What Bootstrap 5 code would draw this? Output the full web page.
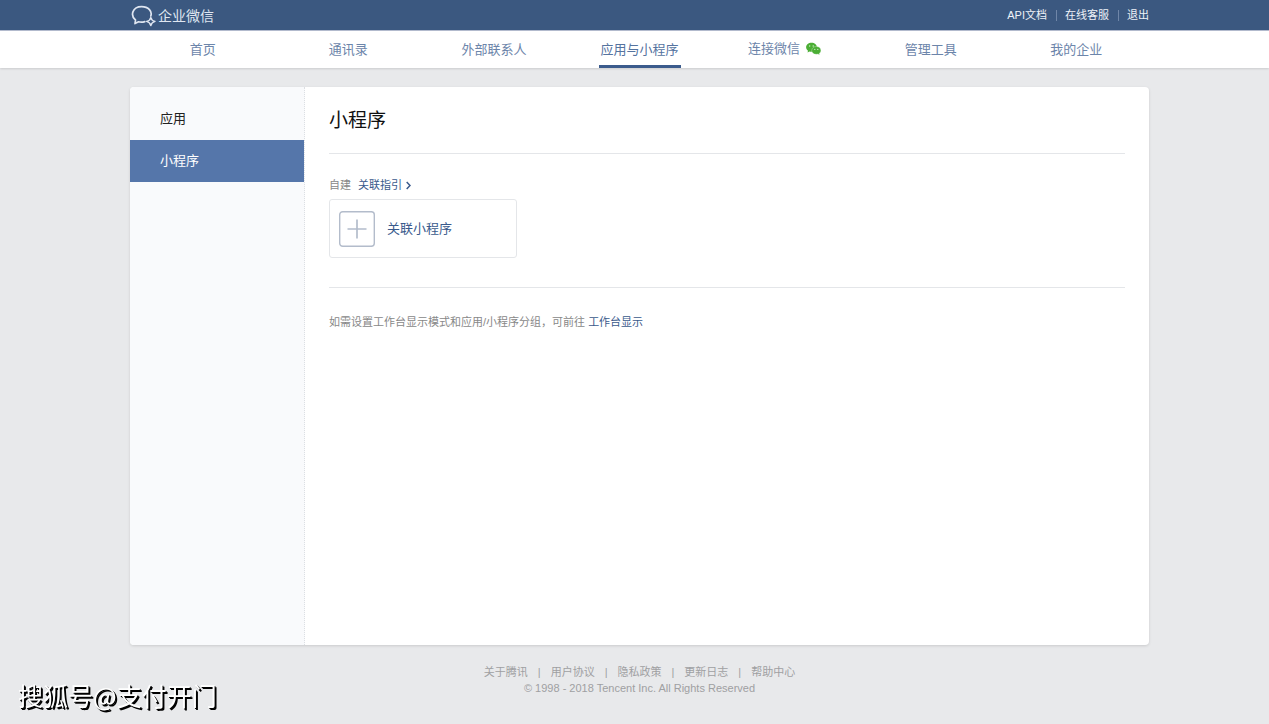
<!DOCTYPE html>
<html lang="zh-CN">
<head>
<meta charset="utf-8">
<meta name="viewport" content="width=device-width, initial-scale=1">
<title>企业微信 - 小程序</title>
<link href="https://cdn.jsdelivr.net/npm/bootstrap@5.3.0/dist/css/bootstrap.min.css" rel="stylesheet">
<style>
  body { font-family: "Liberation Sans", "Noto Sans CJK SC", sans-serif; font-size: 11px; line-height: 16px; background: #e8e9eb; color: #888; }
  a { color: #3a5a8c; text-decoration: none; }
  a:hover { text-decoration: underline; }
  .gutter { padding-left: 10px; }
  .wrap { width: 100%; max-width: 1019px; margin: 0 auto; }
  .topbar { background: #3b5880; border-bottom: 1px solid #b4bccf; }
  .topbar .wrap { height: 30px; }
  .brand { font-size: 14px; line-height: 20px; color: #dfe6f1; padding: 2px 0 0 1px; gap: 1px; }
  .toplinks a { color: #eef2f8; }
  .toplinks .divider { width: 1px; height: 11px; margin: 0 8px 0 9px; background: #6f86a8; }
  .mainnav { background: #fff; box-shadow: 0 1px 2px rgba(0,0,0,.12); }
  .mainnav .nav-item { flex: 1 1 0; display: flex; justify-content: center; }
  .mainnav .nav-link { height: 37px; padding: 2px 2px 0; line-height: 34px; font-size: 13px; color: #6c85aa; border-bottom: 3px solid transparent; white-space: nowrap; }
  .mainnav .nav-link.active { color: #55739f; border-bottom-color: #3b5b8c; }
  .panel { margin-top: 19px; background: #fff; border-radius: 4px; box-shadow: 0 1px 3px rgba(0,0,0,.13); overflow: hidden; }
  .side { width: 175px; flex: none; background: #f9fafc; border-right: 1px dotted #dcdfe3; padding-top: 11px; }
  .side a { height: 42px; padding-left: 30px; font-size: 13px; color: #222; }
  .side a.active { background: #5576aa; color: #fff; }
  .content { padding: 21px 24px; }
  .content h1 { font-size: 19px; line-height: 26px; color: #111; margin: 0 0 19px; }
  .rule { margin: 0; border: 0; border-top: 1px solid #e4e6e9; opacity: 1; }
  .guide { margin: 23px 0 6px; gap: 7px; }
  .addbox { width: 188px; height: 59px; padding: 0 9px; gap: 12px; background: #fff; border: 1px solid #e4e6e9; border-radius: 3px; font-size: 13px; color: #3a5a8c; margin-bottom: 29px; }
  .hint { margin: 26px 0 0; }
  .foot { padding-top: 19px; padding-bottom: 28px; color: #9fa0a2; }
  .foot a { color: #9fa0a2; }
  .foot .links { gap: 10px; }
  .watermark { position: fixed; left: 18px; bottom: 11px; font: 400 25px/36px "Noto Sans CJK SC", sans-serif; color: #fff; text-shadow: 1px 1px 0 #000, 2px 2px 0 #000; }
</style>
</head>
<body class="d-flex flex-column min-vh-100">
<header>
  <div class="topbar gutter">
    <div class="wrap d-flex align-items-center justify-content-between">
      <a href="#" class="brand d-flex align-items-center">
        <svg width="26" height="22" viewBox="0 0 26 22" fill="none" stroke="#dfe6f1" stroke-width="1.7" stroke-linejoin="round" stroke-linecap="round" aria-hidden="true">
          <path d="M13.800 16.600Q10.500 17.600 7.600 16.800L4 18.600L4.500 15C-1 10.500 1.400 1.600 10.600 1.600C17.600 1.600 21.400 6.600 19.800 11"/>
          <path stroke-width="1.500" d="M19.800 12.600Q20.400 15.600 24 16.400Q20.600 17.400 19.800 20.600Q19 17.400 15.600 16.400Q19.200 15.600 19.800 12.600z"/>
        </svg>
        <span>企业微信</span>
      </a>
      <div class="toplinks d-flex align-items-center">
        <a href="#">API文档</a><span class="divider"></span>
        <a href="#">在线客服</a><span class="divider"></span>
        <a href="#">退出</a>
      </div>
    </div>
  </div>
  <nav class="mainnav gutter">
    <div class="wrap">
      <ul class="nav flex-nowrap">
        <li class="nav-item"><a class="nav-link" href="#">首页</a></li>
        <li class="nav-item"><a class="nav-link" href="#">通讯录</a></li>
        <li class="nav-item"><a class="nav-link" href="#">外部联系人</a></li>
        <li class="nav-item"><a class="nav-link active" href="#" aria-current="page">应用与小程序</a></li>
        <li class="nav-item"><a class="nav-link d-flex align-items-center" href="#">连接微信
          <svg class="ms-1" width="18" height="14" viewBox="-1 0 17 14" aria-hidden="true"><path fill="#4bae35" d="M6 .8C2.900.8.6 2.800.6 5.300c0 1.400.8 2.600 1.900 3.400L2 10.400l2-1c.6.2 1.300.3 2 .3C9 9.700 11.400 7.700 11.400 5.300S9 .8 6 .8z"/><path fill="#4bae35" stroke="#fff" stroke-width=".3" d="M10.800 4.500c-2.600 0-4.600 1.700-4.600 3.900s2 3.900 4.600 3.900c.6 0 1.100-.1 1.600-.2l1.700.9-.4-1.500c1-.7 1.700-1.800 1.700-3.100 0-2.200-2-3.900-4.600-3.900z"/><g fill="#d5efcf"><circle cx="4.200" cy="4" r=".7"/><circle cx="7.700" cy="4" r=".7"/><circle cx="9.300" cy="7.400" r=".6"/><circle cx="12.300" cy="7.400" r=".6"/></g></svg></a></li>
        <li class="nav-item"><a class="nav-link" href="#">管理工具</a></li>
        <li class="nav-item"><a class="nav-link" href="#">我的企业</a></li>
      </ul>
    </div>
  </nav>
</header>

<main class="gutter flex-grow-1 d-flex">
  <div class="wrap d-flex">
    <div class="panel d-flex flex-grow-1">
      <aside class="side">
        <a href="#" class="d-flex align-items-center">应用</a>
        <a href="#" class="d-flex align-items-center active" aria-current="page">小程序</a>
      </aside>
      <section class="content flex-grow-1">
        <h1 class="fw-normal">小程序</h1>
        <hr class="rule">
        <div class="guide d-flex align-items-center">
          <span>自建</span>
          <a href="#" class="d-flex align-items-center">关联指引
            <svg class="ms-1" width="5" height="9" viewBox="0 0 5 9" fill="none" stroke="#3a5a8c" stroke-width="1.500" aria-hidden="true"><path d="M.7 1L4 4.500L.7 8"/></svg></a>
        </div>
        <button type="button" class="addbox d-flex align-items-center">
          <svg width="36" height="36" viewBox="0 0 36 36" fill="none" stroke="#b3bccb" aria-hidden="true"><rect x=".7" y=".7" width="34.600" height="34.600" rx="3" stroke-width="1.400"/><path stroke-width="1.700" d="M18 8.500V27.500M8.500 18H27.500"/></svg>
          <span>关联小程序</span>
        </button>
        <hr class="rule">
        <p class="hint">如需设置工作台显示模式和应用/小程序分组，可前往 <a href="#">工作台显示</a></p>
      </section>
    </div>
  </div>
</main>

<footer class="foot gutter text-center">
  <div class="links d-flex justify-content-center">
    <a href="#">关于腾讯</a><span>|</span><a href="#">用户协议</a><span>|</span><a href="#">隐私政策</a><span>|</span><a href="#">更新日志</a><span>|</span><a href="#">帮助中心</a>
  </div>
  <div>© 1998 - 2018 Tencent Inc. All Rights Reserved</div>
</footer>
<div class="watermark">搜狐号@支付开门</div>
<script src="https://cdn.jsdelivr.net/npm/bootstrap@5.3.0/dist/js/bootstrap.bundle.min.js"></script>
</body>
</html>
